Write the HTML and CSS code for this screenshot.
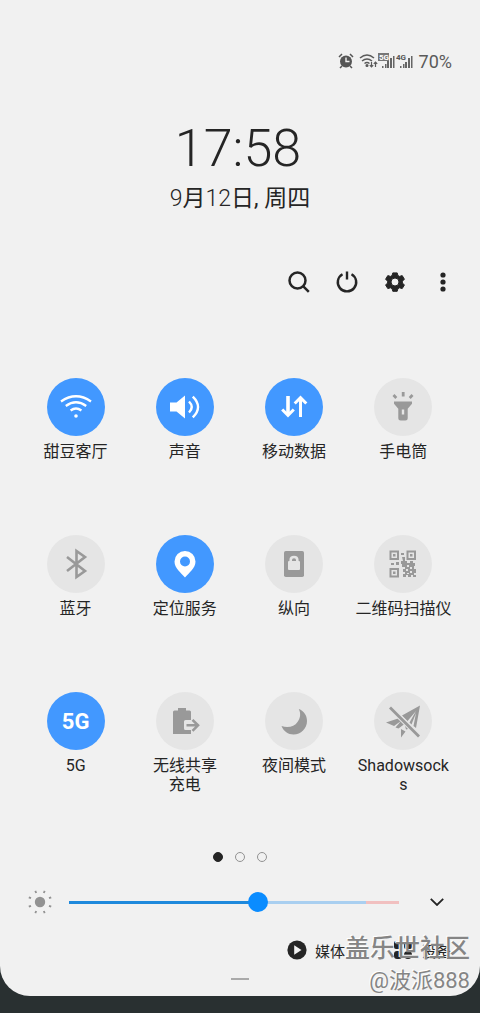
FILE: index.html
```html
<!DOCTYPE html>
<html lang="zh-CN">
<head>
<meta charset="utf-8">
<meta name="viewport" content="width=device-width, initial-scale=1">
<title>快捷面板</title>
<link rel="stylesheet" href="styles.css">
</head>
<body>
<main class="panel">
  <header class="status">
    <svg class="status-alarm" viewBox="0 0 16 16" width="16" height="16"><circle cx="8" cy="8.500" r="6" fill="#555"/><path d="M1 4l3-3M15 4l-3-3M4 13l-2 2M12 13l2 2" stroke="#555" stroke-width="1.500"/><path d="M8 4.500v4h3.500" fill="none" stroke="#f1f1f1" stroke-width="1.400"/></svg>
    <svg class="status-wifi" viewBox="0 0 19 16" width="19" height="16" fill="none" stroke="#5a5a5a" stroke-width="1.500"><path d="M1 5q7-6 14 0M3 8q5-4 10 0M5.500 10.500q2.500-2 5 0"/><circle cx="8" cy="12.500" r=".8" fill="#5a5a5a"/><path d="M12.500 9v5M10.800 12.200l1.700 1.800 1.700-1.800M16.500 14V9M14.800 10.800L16.500 9l1.700 1.800" stroke-width="1.200"/></svg>
    <svg class="signal" viewBox="0 0 18 18" width="18" height="18"><path d="M4 14h1.500v2H4zM7 12h1.500v4H7zM9 9h2v7H9zM12 6h2v10h-2zM15 4h1.500v12H15z" fill="#666"/><rect x="0" y="1" width="11" height="8" fill="#777"/><text x="1" y="8" class="signal-text signal-light">5G</text></svg>
    <svg class="signal" viewBox="0 0 18 18" width="18" height="18"><path d="M4 14h1.500v2H4zM7 12h1.500v4H7zM9 10h2v6H9zM12 6h2v10h-2zM15 4h1.500v12H15z" fill="#666"/><text x="0" y="8" class="signal-text signal-dark">4G</text></svg>
    <span class="battery">70%</span>
  </header>

  <section class="clock">
    <time class="time">17:58</time>
    <p class="date"><span class="thin">9</span>月<span class="thin">12</span>日, 周四</p>
  </section>

  <nav class="tools">
    <button class="tool" type="button" aria-label="搜索"><svg viewBox="0 0 24 24" width="24" height="24" fill="none" stroke="#252525" stroke-width="2.500"><circle cx="10.500" cy="10.500" r="8"/><path d="M16.300 16.300l5.500 5.500"/></svg></button>
    <button class="tool" type="button" aria-label="电源"><svg viewBox="0 0 24 24" width="24" height="24" fill="none" stroke="#252525" stroke-width="2.400"><path d="M7.500 4.200a9.200 9.200 0 1 0 9 0M12 1.500v8"/></svg></button>
    <button class="tool" type="button" aria-label="设置"><svg viewBox="0 0 24 24" width="24" height="24"><path fill="#252525" stroke="#252525" stroke-linejoin="round" fill-rule="evenodd" d="M9.800 2.900h4.400l.7 2.600 1.600.9 2.700-.8 2.200 3.600-2 2v1.800l2 2-2.200 3.600-2.700-.8-1.600.9-.7 2.600H9.800l-.7-2.600-1.600-.9-2.700.8-2.200-3.600 2-2v-1.800l-2-2 2.200-3.600 2.700.8 1.600-.9zM12 8a4 4 0 1 0 0 8 4 4 0 0 0 0-8z"/></svg></button>
    <button class="tool" type="button" aria-label="更多"><svg viewBox="0 0 24 24" width="24" height="24" fill="#252525"><circle cx="12" cy="5" r="2.600"/><circle cx="12" cy="12" r="2.600"/><circle cx="12" cy="19" r="2.600"/></svg></button>
  </nav>

  <section class="tiles">
    <button class="tile" type="button" aria-pressed="true"><span class="disc on"><svg viewBox="0 0 32 32" width="32" height="32" fill="none" stroke="#fff" stroke-width="2.300"><path d="M1 10.500q15-10.500 30 0M5.800 15q10.200-7.400 20.400 0M10.600 19.500q5.400-4 10.800 0"/><circle cx="16" cy="25" r="1.800" fill="#fff" stroke="none"/></svg></span><span class="label">甜豆客厅</span></button>
    <button class="tile" type="button" aria-pressed="true"><span class="disc on"><svg viewBox="0 0 32 32" width="32" height="32"><path d="M1 11.500h6.500L16 4.500v23l-8.500-7H1z" fill="#fff"/><path d="M20 10.500q5.500 5.500 0 11M23.800 5.600q10.500 10.400 0 20.800" fill="none" stroke="#fff" stroke-width="2.400"/></svg></span><span class="label">声音</span></button>
    <button class="tile" type="button" aria-pressed="true"><span class="disc on"><svg viewBox="0 0 32 32" width="32" height="32" fill="none" stroke="#fff"><path d="M10 5v19" stroke-width="3.600"/><path d="M4.200 18.500l5.800 5.800 5.800-5.800M22.500 26V7M16.700 12.500l5.800-5.800 5.800 5.800" stroke-width="3"/></svg></span><span class="label">移动数据</span></button>
    <button class="tile" type="button" aria-pressed="false"><span class="disc"><svg viewBox="0 0 32 32" width="32" height="32"><path fill="#999" fill-rule="evenodd" d="M7 10.500h18v2.200l-4.300 5V27q0 2.500-2.500 2.500h-4.400q-2.500 0-2.500-2.500v-9.300L7 12.700zM14.800 18.500v5h2.400v-5z"/><path d="M14.800 1h2.800v4.500h-2.800zM5.500 5l2-2 2.800 3-2 2zM26.500 5l-2-2-2.800 3 2 2z" fill="#999"/></svg></span><span class="label">手电筒</span></button>

    <button class="tile" type="button" aria-pressed="false"><span class="disc"><svg viewBox="0 0 32 32" width="32" height="32" fill="none" stroke="#999" stroke-width="2.600"><path d="M7 9l18 14-8.500 6V3L25 9 7 23"/></svg></span><span class="label">蓝牙</span></button>
    <button class="tile" type="button" aria-pressed="true"><span class="disc on"><svg viewBox="0 0 32 32" width="32" height="32"><path fill="#fff" fill-rule="evenodd" d="M16 3A10.500 10.500 0 0 0 5.500 13.500C5.500 20.500 12 24.500 16 29.500c4-5 10.500-9 10.500-16A10.500 10.500 0 0 0 16 3zm0 5.500a5 5 0 1 1 0 10 5 5 0 0 1 0-10z"/></svg></span><span class="label">定位服务</span></button>
    <button class="tile" type="button" aria-pressed="false"><span class="disc"><svg viewBox="0 0 32 32" width="32" height="32"><rect x="6" y="3" width="20" height="26" rx="1.800" fill="#999"/><rect x="10" y="13" width="12" height="9" rx="1" fill="#e5e5e5"/><path d="M12.700 14v-2q0-3 3.300-3t3.300 3v2" fill="none" stroke="#e5e5e5" stroke-width="2.600"/></svg></span><span class="label">纵向</span></button>
    <button class="tile" type="button" aria-pressed="false"><span class="disc"><svg viewBox="0 0 32 32" width="32" height="32"><path fill="none" stroke="#999" stroke-width="2" d="M3.500 3.500h7.500v7.500H3.500zM20.500 3.500H28v7.500h-7.500zM3.500 21H11v7.500H3.500z"/><path fill="#999" d="M6 6h2.500v2.500H6zM23 6h2.500v2.500H23zM6 23.500h2.500V26H6zM14 5h3v2h-3zM15 9h3v4h2v2h3v-2h3v2h2v3h-1v3h2v4h-2v2h2v2h-3v-2h-2v2h-3v-2h-2v2h-3v-3h2v-2h-2v-3h2v-2h-3v-3h-1v-3h2zM4 15h3v2H4zM9 14h3v3H9z"/><path fill="#e5e5e5" d="M20 17h2v2h-2zM23 19h2v2h-2zM19 21h2v2h-2zM23 23h2v2h-2zM20 25h2v1h-2z"/></svg></span><span class="label">二维码扫描仪</span></button>

    <button class="tile" type="button" aria-pressed="true"><span class="disc on">5G</span><span class="label">5G</span></button>
    <button class="tile" type="button" aria-pressed="false"><span class="disc"><svg viewBox="0 0 32 32" width="32" height="32"><path fill="#999" d="M5.500 5.500h3.500v-2.500h8v2.500h3.500q1.500 0 1.500 1.500v8h-5.500q-1.500 0-1.500 1.500v7q0 1.500 1.500 1.500H22v4H4V7q0-1.500 1.500-1.500z"/><path fill="none" stroke="#999" stroke-width="2.600" d="M17.500 20.300h11M23.500 14.800l5.500 5.500-5.500 5.500"/></svg></span><span class="label narrow">无线共享充电</span></button>
    <button class="tile" type="button" aria-pressed="false"><span class="disc"><svg viewBox="0 0 32 32" width="32" height="32"><path fill="#999" d="M20.800 4C26 6 29 10.500 29 16 29 23.500 23 29.500 15.500 29.500 10 29.500 5.800 26.500 3.500 21 10 23.500 16.500 21.500 19.500 17 22.500 13 23 8.500 20.800 4z"/></svg></span><span class="label">夜间模式</span></button>
    <button class="tile" type="button" aria-pressed="false"><span class="disc"><svg viewBox="0 0 36 36" width="36" height="36"><path fill="#999" d="M35 2.500L17 12.500l5.500 5.500L31 8l-6.500 11.500 2 2L31 10l-2.500 13 2.500 2zM13 15.500L1 19.500l8 3.500L16 18l-5.500 6.500 3 1 6-4.500 1.500 5.500 4-1zM16 26v8.500l4.500-6z"/><path d="M5 4.500l29 29" stroke="#e5e5e5" stroke-width="5"/><path d="M5 4.500l29 29" stroke="#999" stroke-width="2.800"/></svg></span><span class="label">Shadowsocks</span></button>
  </section>

  <div class="pages"><span class="dot current"></span><span class="dot"></span><span class="dot"></span></div>

  <div class="brightness">
    <svg viewBox="0 0 24 24" width="24" height="24"><circle cx="12" cy="12" r="5.200" fill="#929292"/><path d="M8.200 3L7.300.8M15.800 3l.9-2.200M8.200 21l-.9 2.200M15.800 21l.9 2.200M3 8.200l-2.200-.9M3 15.800l-2.200.9M21 8.200l2.200-.9M21 15.800l2.200.9" stroke="#929292" stroke-width="1.800"/></svg>
    <input class="slider" type="range" min="0" max="1000" value="577" aria-label="亮度">
    <button class="expand" type="button" aria-label="展开"><svg viewBox="0 0 14 8" width="14" height="8" fill="none" stroke="#252525" stroke-width="1.800"><path d="M.8.8L7 7 13.200.8"/></svg></button>
  </div>

  <footer class="footer">
    <button class="link" type="button"><svg viewBox="0 0 20 20" width="20" height="20"><circle cx="10" cy="10" r="9.600" fill="#252525"/><path d="M7.200 5.300v9.400L14.500 10z" fill="#f1f1f1"/></svg>媒体</button>
    <button class="link" type="button"><svg viewBox="0 0 20 20" width="20" height="20" fill="#252525"><rect x="1" y="1" width="8" height="8" rx="2"/><rect x="11" y="1" width="8" height="8" rx="2"/><rect x="1" y="11" width="8" height="8" rx="3"/><circle cx="15" cy="15" r="4"/></svg>设备</button>
  </footer>
  <div class="handle"></div>
  <div class="watermark"><span class="site">盖乐世社区</span><span class="author">@波派888</span></div>
</main>
</body>
</html>
```
FILE: styles.css
```css
* { box-sizing: border-box; }

body {
  margin: 0;
  min-height: 100vh;
  background: #293031;
  color: #252525;
  font-family: Roboto, "Noto Sans CJK SC", sans-serif;
}

button {
  margin: 0;
  padding: 0;
  border: 0;
  background: none;
  color: inherit;
  font: inherit;
}

svg { display: block; flex: none; }

.panel {
  position: relative;
  display: flex;
  flex-direction: column;
  padding-top: 50px;
  background: #f1f1f1;
  border-radius: 0 0 30px 30px;
}

.status {
  display: flex;
  justify-content: flex-end;
  align-items: center;
  height: 22px;
  padding-right: 28px;
}

.status-wifi { margin-left: 5px; }

.signal-text {
  font-size: 8px;
  font-weight: 700;
}

.signal-light { fill: #fff; }
.signal-dark { fill: #555; }

.battery {
  margin-left: 5px;
  font-size: 18px;
  color: #5a5a5a;
}

.clock {
  padding-top: 47px;
  text-align: center;
}

.time {
  display: block;
  padding-right: 4px;
  font-size: 52px;
  font-weight: 300;
  line-height: 60px;
}

.date {
  margin: 6px 0 0;
  font-size: 23px;
  line-height: 28px;
}

.thin { font-weight: 300; }

.tools {
  display: flex;
  justify-content: flex-end;
  gap: 24px;
  margin-top: 57px;
  padding-right: 25px;
}

.tiles {
  display: grid;
  grid-template-columns: repeat(4, 1fr);
  grid-auto-rows: 157px;
  margin-top: 84px;
  padding: 0 22px 0 21px;
}

.tile {
  display: flex;
  flex-direction: column;
  align-items: center;
}

.disc {
  display: flex;
  align-items: center;
  justify-content: center;
  width: 58px;
  height: 58px;
  border-radius: 50%;
  background: #e5e5e5;
  font-size: 22px;
  font-weight: 700;
}

.disc.on {
  background: #4298ff;
  color: #fff;
}

.label {
  width: 98px;
  margin-top: 6px;
  padding: 0 1px;
  font-size: 16px;
  line-height: 19px;
  text-align: center;
  overflow-wrap: anywhere;
}

.narrow { padding: 0 17px; }

.pages {
  display: flex;
  justify-content: center;
  gap: 12px;
  margin-top: 3px;
}

.dot {
  width: 10px;
  height: 10px;
  border: 1px solid #929292;
  border-radius: 50%;
}

.current {
  border-color: #252525;
  background: #252525;
}

.brightness {
  display: flex;
  align-items: center;
  height: 24px;
  margin-top: 28px;
  padding: 0 36px 0 28px;
}

.slider {
  flex: 1;
  min-width: 0;
  height: 20px;
  margin: 0 31px 0 17px;
  appearance: none;
  background: linear-gradient(to right, #1f89dc 57%, #a9cff0 57% 90%, #f1c0c0 90%) center / 100% 3px no-repeat;
}

.slider::-webkit-slider-thumb {
  appearance: none;
  width: 20px;
  height: 20px;
  border-radius: 50%;
  background: #0a8cff;
}

.footer {
  display: flex;
  justify-content: flex-end;
  gap: 48px;
  margin-top: 24px;
  padding-right: 29px;
}

.link {
  display: flex;
  align-items: center;
  gap: 8px;
  height: 24px;
  font-size: 15px;
}

.handle {
  width: 18px;
  height: 2px;
  margin: 16px auto;
  background: #aaa;
}

.watermark {
  position: absolute;
  right: 10px;
  bottom: 0;
  display: flex;
  flex-direction: column;
  align-items: flex-end;
  color: #858585;
  text-shadow: -1px -1px #fff;
  pointer-events: none;
}

.site {
  font-size: 25px;
  line-height: 34px;
  font-weight: 500;
}

.author {
  font-size: 22px;
  line-height: 30px;
}
```
